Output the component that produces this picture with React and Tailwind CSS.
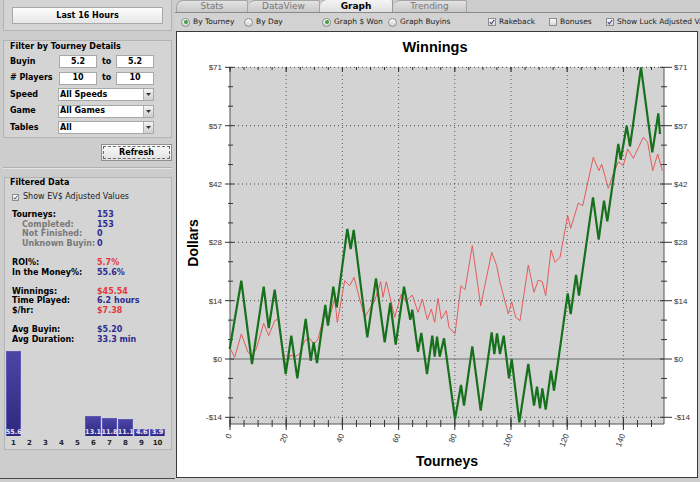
import React from 'react';

const green = [
  [229.7, 350], [241.3, 281.7], [252, 365], [263.7, 287.7], [268.7, 329], [274.7, 290.7],
  [285.7, 375], [291.3, 336.7], [297.3, 379.3], [305.7, 320], [310.7, 361.7], [313.7, 343.3],
  [317, 364], [325.3, 306], [328, 326.7], [333.3, 287.7], [336.7, 308.3], [347.3, 230],
  [350.7, 250], [353.7, 231], [367.3, 338.3], [376, 279.3], [384.7, 343.3], [390.3, 304],
  [395.7, 345.7], [404, 287.7], [410.3, 320.7], [412.3, 310.7], [418, 352.7], [421.3, 334],
  [427, 375], [432.3, 336.7], [434.7, 357.7], [437, 337.7], [439.7, 357.7], [444, 339.3],
  [455, 420], [461, 386], [464, 406.7], [472.3, 347.3], [480.7, 411.7], [491.7, 333.3],
  [494.3, 355], [497, 334.3], [500, 355], [503.7, 336.7], [509, 379.3], [511.7, 360],
  [519.3, 423.3], [528.3, 365], [534, 406.7], [537, 387.7], [540, 409.3], [542.3, 389.3],
  [545.7, 410.7], [551, 371.7], [554, 391.7], [567.7, 294.3], [570.7, 315], [576, 276],
  [579, 296.7], [593, 198.3], [598.7, 240.7], [604, 201.7], [607.3, 222.3], [618.3, 145],
  [620.7, 160.7], [626.7, 126.7], [630, 147.3], [641, 68.3], [652.3, 153.3], [658.3, 114.3],
  [660, 135],
];

const red = [
  [229.7, 348.3], [234.7, 358.3], [241.3, 335], [248, 353.3], [252, 356.7], [256.3, 350],
  [263.7, 324.3], [268.7, 336.7], [274.7, 321.7], [278, 320], [285.7, 366.7], [290.7, 356],
  [294.7, 357.7], [299.7, 355], [304.7, 341.7], [309.7, 339.3], [314, 345], [318, 340],
  [324.7, 314], [328, 325], [334.7, 299.3], [337.3, 323.3], [344.7, 281.7], [349.7, 286.7],
  [354, 278.3], [359.7, 300], [364.7, 318.3], [374.7, 301.7], [380.7, 282.7], [383, 298.3],
  [386.3, 282.7], [390.7, 301], [394.7, 318.3], [401.3, 295], [405.7, 302.7], [412.3, 296],
  [418, 313.3], [422.3, 300], [427.3, 320.7], [431.3, 310], [434.7, 323.3], [438, 299.3],
  [441.3, 320], [446.3, 311.7], [449, 328.3], [455, 335], [461, 286.7], [465, 290.7],
  [472.3, 246.7], [480.7, 306.7], [491.7, 253.3], [496.7, 266.7], [500, 283.3], [508.3, 315],
  [511.7, 302.7], [515.7, 318.3], [520, 321.7], [528.3, 266], [534, 293.3], [538.3, 281],
  [542.3, 282.7], [545.7, 296.7], [551, 251], [555, 263.3], [560, 258.3], [567.7, 216.7],
  [570.7, 229.3], [578.3, 204], [582.7, 206.7], [593.3, 158.3], [599, 171.7], [601.7, 165],
  [608.3, 189.3], [613.3, 175], [618.3, 162.7], [623.3, 166.7], [627.7, 150], [633.3, 159.3],
  [643.3, 138.3], [647.7, 143.3], [652.7, 171.7], [657.7, 155], [662.3, 171.7],
];

const toPath = (pts) => pts.map((p, i) => (i ? 'L' : 'M') + p[0] + ' ' + p[1]).join(' ');

function Chart() {
  const majorY = [68.3, 126.7, 185, 243.3, 301.7, 360, 418.3];
  const yLabels = ['$71', '$57', '$42', '$28', '$14', '$0', '-$14'];
  const minorY = [];
  for (let i = 0; i < 6; i++) minorY.push(majorY[i] + 19.44, majorY[i] + 38.89);
  const majorX = [0, 1, 2, 3, 4, 5, 6, 7].map((k) => 230 + 56.2 * k);
  const minorX = [];
  for (let x = 230; x <= 664; x += 14.05) minorX.push(x);
  const L = 230, R = 664, T = 68, B = 425;

  return (
    <svg width="520" height="445" viewBox="177 33 520 445" className="block">
      <text x="435" y="53" textAnchor="middle" fontFamily="Liberation Sans, Arial, sans-serif" fontWeight="700" fontSize="14.5" fill="#000">Winnings</text>
      <text transform="translate(198 244) rotate(-90)" textAnchor="middle" fontFamily="Liberation Sans, Arial, sans-serif" fontWeight="700" fontSize="14" fill="#000">Dollars</text>
      <text x="447" y="467" textAnchor="middle" fontFamily="Liberation Sans, Arial, sans-serif" fontWeight="700" fontSize="14" fill="#000">Tourneys</text>

      <rect x={L} y={T} width={R - L} height={B - T} fill="#d3d3d3" />

      {majorX.slice(1).map((x) => (
        <line key={'gx' + x} x1={x} y1={T} x2={x} y2={B} stroke="#555" strokeWidth="1" strokeDasharray="1 3" />
      ))}
      {majorY.map((y, i) =>
        i === 5 ? (
          <line key={'gy' + y} x1={L} y1={y} x2={R} y2={y} stroke="#6e6e6e" strokeWidth="1.2" />
        ) : (
          <line key={'gy' + y} x1={L} y1={y} x2={R} y2={y} stroke="#444" strokeWidth="1" strokeDasharray="1 3" />
        )
      )}

      <line x1={L} y1={T} x2={L} y2={B} stroke="#555" strokeWidth="1" />
      <line x1={R} y1={T} x2={R} y2={B} stroke="#555" strokeWidth="1" />
      <line x1={L} y1={B} x2={R} y2={B} stroke="#555" strokeWidth="1" />

      {majorY.map((y, i) => (
        <g key={'my' + i}>
          <line x1={225} y1={y} x2={234} y2={y} stroke="#333" />
          <line x1={660} y1={y} x2={672} y2={y} stroke="#333" />
          <text x="222" y={y + 3} textAnchor="end" fontFamily="Liberation Sans, Arial, sans-serif" fontSize="8" fill="#333">{yLabels[i]}</text>
          <text x="674" y={y + 3} fontFamily="Liberation Sans, Arial, sans-serif" fontSize="8" fill="#333">{yLabels[i]}</text>
        </g>
      ))}
      {minorY.map((y, i) => (
        <g key={'ny' + i}>
          <line x1={228} y1={y} x2={233} y2={y} stroke="#333" />
          <line x1={661} y1={y} x2={667} y2={y} stroke="#333" />
        </g>
      ))}

      {minorX.map((x, i) => (
        <g key={'nx' + i}>
          <line x1={x} y1={421} x2={x} y2={428} stroke="#333" />
          <line x1={x} y1={T} x2={x} y2={T + 3} stroke="#333" />
        </g>
      ))}
      {majorX.map((x, i) => (
        <g key={'mx' + i}>
          <line x1={x} y1={418} x2={x} y2={431} stroke="#333" />
          <line x1={x} y1={T} x2={x} y2={T + 5} stroke="#333" />
          <text
            transform={`translate(${x + 2} 436) rotate(-68)`}
            textAnchor="end"
            fontFamily="Liberation Sans, Arial, sans-serif"
            fontSize="8"
            fill="#333"
          >
            {i * 20}
          </text>
        </g>
      ))}

      <path d={toPath(red)} fill="none" stroke="#e35b5b" strokeWidth="1" strokeLinejoin="round" />
      <path d={toPath(green)} fill="none" stroke="#17701c" strokeWidth="2.2" strokeLinejoin="miter" />
    </svg>
  );
}

function Radio({ on, label, w }) {
  return (
    <div className={`flex items-center gap-[3px] shrink-0 whitespace-nowrap ${w}`}>
      <span className="w-[9px] h-[9px] rounded-full border border-[#8d8d8d] bg-linear-to-b from-[#fafafa] to-[#d2d2d2] flex items-center justify-center shrink-0">
        {on && <span className="w-[4px] h-[4px] rounded-full bg-[#3f9f45]" />}
      </span>
      <span>{label}</span>
    </div>
  );
}

function Check({ on, label, w }) {
  return (
    <div className={`flex items-center gap-[3px] shrink-0 whitespace-nowrap ${w}`}>
      <span className="w-[8px] h-[8px] border border-[#8d8d8d] bg-linear-to-b from-[#fafafa] to-[#dadada] flex items-center justify-center shrink-0">
        {on && (
          <svg width="6" height="6" viewBox="0 0 6 6">
            <path d="M0.8 3.2 L2.3 4.8 L5.3 0.8" fill="none" stroke="#4a4a8a" strokeWidth="1.1" />
          </svg>
        )}
      </span>
      <span>{label}</span>
    </div>
  );
}

function Input({ value }) {
  return (
    <div className="w-[38px] h-[13px] bg-white border border-[#a8a8a8] flex items-center justify-center text-[8px] font-bold leading-none">
      {value}
    </div>
  );
}

function Select({ value }) {
  return (
    <div className="w-[96px] h-[13px] bg-white border border-[#a8a8a8] flex items-center text-[8px] font-bold leading-none">
      <span className="flex-1 pl-[1px]">{value}</span>
      <span className="w-[10px] h-[11px] bg-linear-to-b from-[#f2f2f2] to-[#cfcfcf] border-l border-[#b0b0b0] flex items-center justify-center">
        <svg width="5" height="3" viewBox="0 0 5 3">
          <path d="M0 0 L5 0 L2.5 3 Z" fill="#333" />
        </svg>
      </span>
    </div>
  );
}

const stats = [
  { l: 'Tourneys:', v: '153', c: 'text-[#2d2d8f]' },
  { l: 'Completed:', v: '153', c: 'text-[#2d2d8f]', sub: true },
  { l: 'Not Finished:', v: '0', c: 'text-[#2d2d8f]', sub: true },
  { l: 'Unknown Buyin:', v: '0', c: 'text-[#2d2d8f]', sub: true },
  null,
  { l: 'ROI%:', v: '5.7%', c: 'text-[#e23a3a]' },
  { l: 'In the Money%:', v: '55.6%', c: 'text-[#2d2d8f]' },
  null,
  { l: 'Winnings:', v: '$45.54', c: 'text-[#e23a3a]' },
  { l: 'Time Played:', v: '6.2 hours', c: 'text-[#2d2d8f]' },
  { l: '$/hr:', v: '$7.38', c: 'text-[#e23a3a]' },
  null,
  { l: 'Avg Buyin:', v: '$5.20', c: 'text-[#2d2d8f]' },
  { l: 'Avg Duration:', v: '33.3 min', c: 'text-[#2d2d8f]' },
];

const bars = [55.6, 0, 0, 0, 0, 13.1, 11.8, 11.1, 4.6, 3.9];

export default function App() {
  return (
    <div className="flex w-[700px] h-[482px] bg-[#cdcdcd] overflow-hidden font-['DejaVu_Sans',sans-serif] text-black">
      {/* left panel */}
      <div className="w-[175px] h-[479px] flex flex-col border-b border-[#4a4a4a] shrink-0">
        <div className="mx-[3px] h-[31px] border-x border-b border-[#b3b3b3] bg-[#d4d4d4] pt-[7px] px-[8px]">
          <div className="h-[17px] bg-linear-to-b from-[#fdfdfd] to-[#e6e6e6] border border-[#a9a9a9] flex items-center justify-center text-[8px] font-bold">
            Last 16 Hours
          </div>
        </div>

        <div className="mt-[9px] mx-[3px] h-[98px] border border-[#b3b3b3] bg-[#d4d4d4] px-[6px]">
          <div className="leading-[9px] mt-[1px] text-[8px] font-bold">Filter by Tourney Details</div>
          <div className="mt-[4px] flex flex-col gap-[3.5px] text-[8px] font-bold">
            <div className="h-[13px] flex items-center">
              <span className="w-[49px]">Buyin</span>
              <Input value="5.2" />
              <span className="w-[19px] pl-[5px]">to</span>
              <Input value="5.2" />
            </div>
            <div className="h-[13px] flex items-center">
              <span className="w-[49px]"># Players</span>
              <Input value="10" />
              <span className="w-[19px] pl-[5px]">to</span>
              <Input value="10" />
            </div>
            <div className="h-[13px] flex items-center">
              <span className="w-[48px]">Speed</span>
              <Select value="All Speeds" />
            </div>
            <div className="h-[13px] flex items-center">
              <span className="w-[48px]">Game</span>
              <Select value="All Games" />
            </div>
            <div className="h-[13px] flex items-center">
              <span className="w-[48px]">Tables</span>
              <Select value="All" />
            </div>
          </div>
        </div>

        <div className="mt-[6px] ml-[101px] w-[71px] h-[17px] p-[1px] bg-linear-to-b from-[#fbfbfb] to-[#e2e2e2] border border-[#8e8e8e]">
          <div className="h-full border border-dashed border-[#6a6a6a] flex items-center justify-center text-[8px] font-bold">
            Refresh
          </div>
        </div>

        <div className="mt-[6px] mx-[3px] h-[2px] border-t border-[#b0b0b0] border-b border-b-[#e4e4e4]" />

        <div className="mt-[8px] ml-[4px] mr-[3px] h-[273px] border border-[#b3b3b3] bg-[#d4d4d4] px-[5px]">
          <div className="leading-[9px] mt-[0px] text-[8px] font-bold">Filtered Data</div>
          <div className="mt-[5px] ml-[2px] flex items-center gap-[4px] h-[10px]">
            <span className="w-[7px] h-[7px] border border-[#8d8d8d] bg-linear-to-b from-[#fafafa] to-[#dadada] flex items-center justify-center">
              <svg width="5" height="5" viewBox="0 0 6 6">
                <path d="M0.8 3.2 L2.3 4.8 L5.3 0.8" fill="none" stroke="#4a4a8a" strokeWidth="1.1" />
              </svg>
            </span>
            <span className="text-[8px] text-[#222]">Show EV$ Adjusted Values</span>
          </div>

          <div className="mt-[8px] ml-[2px] flex flex-col text-[8px] font-bold">
            {stats.map((s, i) =>
              s ? (
                <div key={i} className="flex h-[9.6px] leading-[9.6px] whitespace-nowrap">
                  <span className={`w-[85px] ${s.sub ? 'pl-[10px] text-[#7a7a7a]' : ''}`}>{s.l}</span>
                  <span className={s.c}>{s.v}</span>
                </div>
              ) : (
                <div key={i} className="h-[9.6px]" />
              )
            )}
          </div>

          <div className="mt-[7px] -ml-[4px] flex items-end h-[85px]">
            {bars.map((v, i) => (
              <div key={i} className="w-[16.3px] pr-[1px] flex flex-col justify-end h-full">
                {v > 0 && (
                  <div
                    className="bg-linear-to-b from-[#4b45a6] to-[#2e2a7e] border-t border-x border-[#5d57b5] flex items-end justify-center"
                    style={{ height: Math.max(7, v * 1.53) + 'px' }}
                  >
                    <span className="text-[6.5px] leading-[7px] font-bold text-[#e8e8ff]">{v}</span>
                  </div>
                )}
              </div>
            ))}
          </div>
          <div className="mt-[2px] -ml-[4px] flex h-[10px]">
            {bars.map((_, i) => (
              <div key={i} className="w-[16.3px] pr-[1px] text-center text-[7px] leading-[10px] font-bold text-[#222]">
                {i + 1}
              </div>
            ))}
          </div>
        </div>
      </div>

      {/* right panel */}
      <div className="flex-1 flex flex-col">
        <div className="h-[13px] flex items-end border-b border-[#8a8a8a] text-[9px] leading-none">
          <div className="ml-[1px] w-[72px] h-[12px] rounded-tl-[7px] rounded-tr-[2px] border-t border-x border-[#a5a5a5] bg-linear-to-b from-[#e2e2e2] to-[#c9c9c9] flex items-center justify-center text-[#777]">Stats</div>
          <div className="w-[72px] h-[12px] rounded-tl-[7px] rounded-tr-[2px] border-t border-r border-[#a5a5a5] bg-linear-to-b from-[#e2e2e2] to-[#c9c9c9] flex items-center justify-center text-[#777]">DataView</div>
          <div className="w-[73px] h-[13px] rounded-tl-[7px] rounded-tr-[2px] border-t border-r border-[#9a9a9a] bg-linear-to-b from-[#f4f4f4] to-[#e0e0e0] flex items-center justify-center font-bold text-black">Graph</div>
          <div className="w-[74px] h-[12px] rounded-tl-[7px] rounded-tr-[2px] border-t border-r border-[#a5a5a5] bg-linear-to-b from-[#e2e2e2] to-[#c9c9c9] flex items-center justify-center text-[#777]">Trending</div>
        </div>
        <div className="h-[18px] flex items-center pl-[6px] text-[7.5px] text-[#222] bg-[#d2d2d2] overflow-hidden whitespace-nowrap">
          <Radio on label="By Tourney" w="w-[63px]" />
          <Radio label="By Day" w="w-[78px]" />
          <Radio on label="Graph $ Won" w="w-[66px]" />
          <Radio label="Graph Buyins" w="w-[100px]" />
          <Check on label="Rakeback" w="w-[61px]" />
          <Check label="Bonuses" w="w-[57px]" />
          <Check on label="Show Luck Adjusted Values" w="w-[100px]" />
        </div>
        <div className="ml-[1px] w-[522px] h-[447px] border border-[#3a3a3a] bg-white overflow-hidden">
          <Chart />
        </div>
      </div>
    </div>
  );
}
